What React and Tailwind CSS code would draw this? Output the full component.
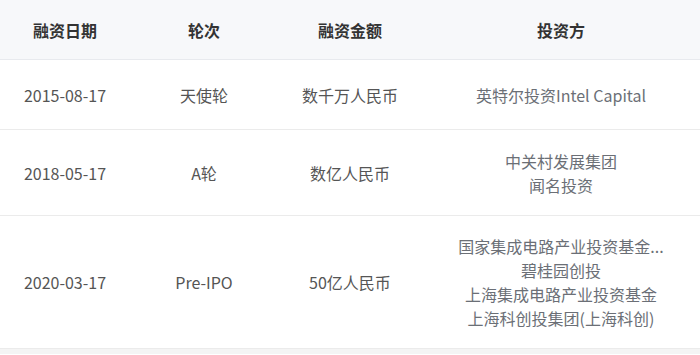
import React from 'react';

const rows = [
  { date: '2015-08-17', round: '天使轮', amount: '数千万人民币', investors: ['英特尔投资Intel Capital'], h: 'h-[70px]' },
  { date: '2018-05-17', round: 'A轮', amount: '数亿人民币', investors: ['中关村发展集团', '闻名投资'], h: 'h-[86px]' },
  {
    date: '2020-03-17',
    round: 'Pre-IPO',
    amount: '50亿人民币',
    investors: ['国家集成电路产业投资基金...', '碧桂园创投', '上海集成电路产业投资基金', '上海科创投集团(上海科创)'],
    h: 'h-[133px]',
  },
];

const cols = 'grid grid-cols-[130px_148px_144px_278px]';

const App = () => {
  return (
    <div className="w-[700px] h-[355px] bg-white overflow-hidden" style={{ fontFamily: '"Noto Sans CJK SC", "Noto Sans", sans-serif' }}>
      {/* Header */}
      <div className={`${cols} h-[60px] bg-[#f7f8fa] border-b border-[#e8eaee] text-[16px] font-bold text-[#333]`}>
        <div className="flex items-center justify-center">融资日期</div>
        <div className="flex items-center justify-center">轮次</div>
        <div className="flex items-center justify-center">融资金额</div>
        <div className="flex items-center justify-center">投资方</div>
      </div>

      {rows.map((r) => (
        <div key={r.date} className={`${cols} ${r.h} border-b border-[#ebebeb] text-[16px] text-[#555]`}>
          <div className="flex items-center justify-center">{r.date}</div>
          <div className="flex items-center justify-center">{r.round}</div>
          <div className="flex items-center justify-center">{r.amount}</div>
          <div className="flex flex-col items-center justify-center leading-[24px] text-[#6b6f76]">
            {r.investors.map((name) => (
              <span key={name}>{name}</span>
            ))}
          </div>
        </div>
      ))}

      <div className="h-[5px] bg-[#f4f4f4]" />
    </div>
  );
};

export default App;
